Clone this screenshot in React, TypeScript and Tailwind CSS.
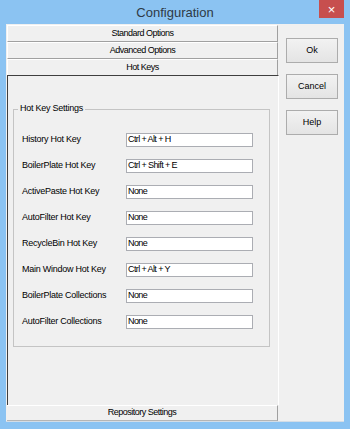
import React from 'react'

const rows = [
  { label: 'History Hot Key', value: 'Ctrl + Alt + H' },
  { label: 'BoilerPlate Hot Key', value: 'Ctrl + Shift + E' },
  { label: 'ActivePaste Hot Key', value: 'None' },
  { label: 'AutoFilter Hot Key', value: 'None' },
  { label: 'RecycleBin Hot Key', value: 'None' },
  { label: 'Main Window Hot Key', value: 'Ctrl + Alt + Y' },
  { label: 'BoilerPlate Collections', value: 'None' },
  { label: 'AutoFilter Collections', value: 'None' },
]

const Tab = ({ title }: { title: string }) => (
  <div className="h-[17px] w-[271px] shrink-0 flex items-center justify-center bg-[#f0f0f0] border-t border-l border-t-white border-l-white border-r border-r-[#a0a0a0] border-b border-b-[#a0a0a0] text-[9px] tracking-[-0.5px] text-black">
    {title}
  </div>
)

const DlgButton = ({ label }: { label: string }) => (
  <button className="w-[52px] h-[25px] border border-[#acacac] bg-gradient-to-b from-[#f2f2f2] to-[#e4e4e4] text-[9px] text-black">
    {label}
  </button>
)

export default function App() {
  return (
    <div
      className="w-[350px] h-[429px] bg-[#8bc3f2] flex flex-col overflow-hidden"
      style={{ fontFamily: '"Liberation Sans", Arial, sans-serif' }}
    >
      {/* Title bar */}
      <div className="h-[24px] shrink-0 relative flex items-center justify-center">
        <span className="text-[13px] text-[#2e3a46] leading-none mt-[1px]">Configuration</span>
        <div className="absolute right-[6px] top-0 w-[25px] h-[18px] bg-[#c74f4e] flex items-center justify-center text-white text-[13px] leading-none">
          ×
        </div>
      </div>

      {/* Client area */}
      <div className="flex flex-1 ml-[6px] mr-[6px] mb-[7px] bg-[#f0f0f0] border-b border-[#d4dde6]">
        {/* Left column: accordion */}
        <div className="w-[273px] shrink-0 flex flex-col pl-[1px] pt-[1px]">
          <Tab title="Standard Options" />
          <Tab title="Advanced Options" />
          <div className="h-[16px] w-[271px] shrink-0 flex items-center justify-center bg-[#f0f0f0] border-t border-l border-t-white border-l-white border-r border-r-[#a0a0a0] text-[9px] tracking-[-0.5px] text-black">
            Hot Keys
          </div>

          {/* Panel */}
          <div className="flex-1 w-[272px] border-t border-l border-[#3f3f3f] border-r border-r-white pl-[5px] pt-[33px]">
            <div className="relative w-[257px] h-[238px] border border-[#c4c4c4] pl-[8px] pt-[23px] flex flex-col">
              <span className="absolute left-[4px] -top-[6px] bg-[#f0f0f0] px-[2px] text-[9px] tracking-[-0.25px] leading-none text-black">
                Hot Key Settings
              </span>
              {rows.map(r => (
                <div key={r.label} className="h-[26px] flex items-start">
                  <span className="w-[104px] h-[14px] flex items-center text-[9px] tracking-[-0.25px] text-black whitespace-nowrap">
                    {r.label}
                  </span>
                  <div className="w-[127px] h-[14px] border border-[#abadb3] bg-white flex items-center pl-[1px] text-[9px] tracking-[-0.6px] text-black whitespace-nowrap">
                    {r.value}
                  </div>
                </div>
              ))}
            </div>
          </div>

          <div className="h-[16px] w-[271px] shrink-0 flex items-center justify-center bg-[#f0f0f0] border-t border-t-white border-r border-r-[#a0a0a0] border-b border-b-[#b5b5b5] text-[9px] tracking-[-0.5px] text-black">
            Repository Settings
          </div>
        </div>

        {/* Right column: dialog buttons */}
        <div className="flex flex-col gap-[11px] pl-[7px] pt-[14px]">
          <DlgButton label="Ok" />
          <DlgButton label="Cancel" />
          <DlgButton label="Help" />
        </div>
      </div>
    </div>
  )
}
